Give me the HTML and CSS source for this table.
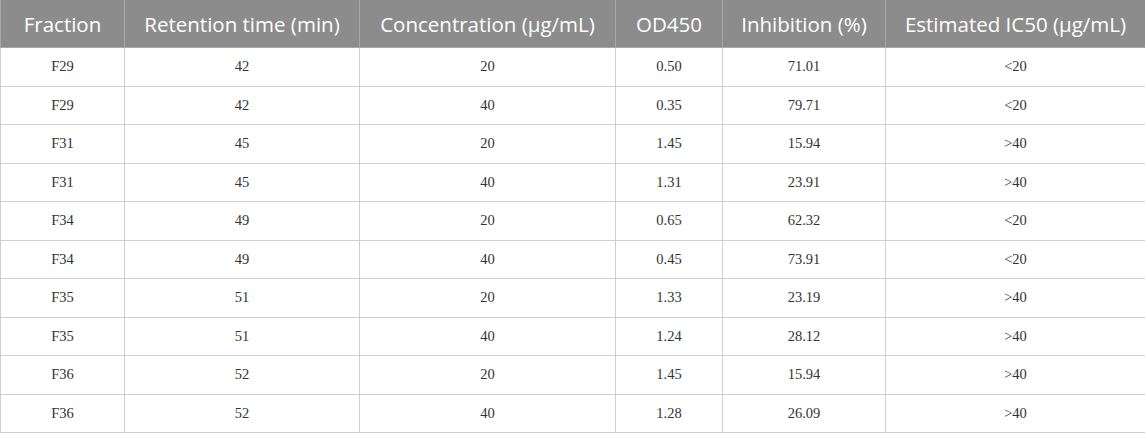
FILE: index.html
```html
<!DOCTYPE html>
<html>
<head>
<meta charset="utf-8">
<link rel="stylesheet" href="styles.css">
</head>
<body>
<table class="data">
<colgroup>
<col class="c1"><col class="c2"><col class="c3"><col class="c4"><col class="c5"><col class="c6">
</colgroup>
<thead>
<tr><th>Fraction</th><th>Retention time (min)</th><th>Concentration (µg/mL)</th><th>OD450</th><th>Inhibition (%)</th><th>Estimated IC50 (µg/mL)</th></tr>
</thead>
<tbody>
<tr><td>F29</td><td>42</td><td>20</td><td>0.50</td><td>71.01</td><td>&lt;20</td></tr>
<tr><td>F29</td><td>42</td><td>40</td><td>0.35</td><td>79.71</td><td>&lt;20</td></tr>
<tr><td>F31</td><td>45</td><td>20</td><td>1.45</td><td>15.94</td><td>&gt;40</td></tr>
<tr><td>F31</td><td>45</td><td>40</td><td>1.31</td><td>23.91</td><td>&gt;40</td></tr>
<tr><td>F34</td><td>49</td><td>20</td><td>0.65</td><td>62.32</td><td>&lt;20</td></tr>
<tr><td>F34</td><td>49</td><td>40</td><td>0.45</td><td>73.91</td><td>&lt;20</td></tr>
<tr><td>F35</td><td>51</td><td>20</td><td>1.33</td><td>23.19</td><td>&gt;40</td></tr>
<tr><td>F35</td><td>51</td><td>40</td><td>1.24</td><td>28.12</td><td>&gt;40</td></tr>
<tr><td>F36</td><td>52</td><td>20</td><td>1.45</td><td>15.94</td><td>&gt;40</td></tr>
<tr><td>F36</td><td>52</td><td>40</td><td>1.28</td><td>26.09</td><td>&gt;40</td></tr>
</tbody>
</table>
</body>
</html>
```
FILE: styles.css
```css
html, body {
  margin: 0;
  padding: 0;
  background: #fff;
}
.data {
  width: 1145px;
  border-collapse: collapse;
  table-layout: fixed;
}
.c1 { width: 124px; }
.c2 { width: 235px; }
.c3 { width: 256px; }
.c4 { width: 107px; }
.c5 { width: 163px; }
.c6 { width: 260px; }
.data th {
  background: #8c8c8c;
  color: #fff;
  font-family: "Open Sans", "Noto Sans", sans-serif;
  font-weight: 400;
  font-size: 20.5px;
  height: 47px;
  padding: 0;
  text-align: center;
  border: 1px solid #a8a8a8;
  border-top: none;
}
.data td {
  font-family: "Liberation Serif", "Times New Roman", serif;
  font-size: 14.5px;
  color: #333;
  text-align: center;
  height: 37.5px;
  padding: 0;
  border: 1px solid #cfcfcf;
}
```
